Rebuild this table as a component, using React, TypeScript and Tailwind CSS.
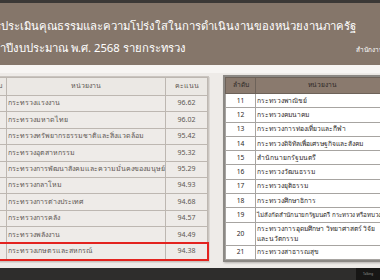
const leftRows = [
  { no: 1, name: 'กระทรวงแรงงาน', score: '96.62' },
  { no: 2, name: 'กระทรวงมหาดไทย', score: '96.02' },
  { no: 3, name: 'กระทรวงทรัพยากรธรรมชาติและสิ่งแวดล้อม', score: '95.42' },
  { no: 4, name: 'กระทรวงอุตสาหกรรม', score: '95.32' },
  { no: 5, name: 'กระทรวงการพัฒนาสังคมและความมั่นคงของมนุษย์', score: '95.29' },
  { no: 6, name: 'กระทรวงกลาโหม', score: '94.93' },
  { no: 7, name: 'กระทรวงการต่างประเทศ', score: '94.68' },
  { no: 8, name: 'กระทรวงการคลัง', score: '94.57' },
  { no: 9, name: 'กระทรวงพลังงาน', score: '94.49' },
  { no: 10, name: 'กระทรวงเกษตรและสหกรณ์', score: '94.38' },
];

const rightRows = [
  { no: 11, name: 'กระทรวงพาณิชย์', score: '94.21' },
  { no: 12, name: 'กระทรวงคมนาคม', score: '94.05' },
  { no: 13, name: 'กระทรวงการท่องเที่ยวและกีฬา', score: '93.87' },
  { no: 14, name: 'กระทรวงดิจิทัลเพื่อเศรษฐกิจและสังคม', score: '93.64' },
  { no: 15, name: 'สำนักนายกรัฐมนตรี', score: '93.52' },
  { no: 16, name: 'กระทรวงวัฒนธรรม', score: '93.11' },
  { no: 17, name: 'กระทรวงยุติธรรม', score: '92.96' },
  { no: 18, name: 'กระทรวงศึกษาธิการ', score: '92.74' },
  { no: 19, name: 'ไม่สังกัดสำนักนายกรัฐมนตรี กระทรวง หรือทบวง', score: '92.53', tight: true },
  { no: 20, name: 'กระทรวงการอุดมศึกษา วิทยาศาสตร์ วิจัย', name2: 'และนวัตกรรม', score: '92.40' },
  { no: 21, name: 'กระทรวงสาธารณสุข', score: '92.18' },
];

export default function App() {
  return (
    <div className="w-[380px] h-[280px] overflow-hidden bg-[#eeebe8] flex flex-col font-['Noto_Sans','DejaVu_Sans',sans-serif]">
      <div className="h-[3px] bg-[#3b3836]" />

      {/* title band */}
      <header className="h-[62px] bg-[#85766a] text-white overflow-hidden flex flex-col">
        <p className="whitespace-nowrap text-[11.3px] leading-[20px] mt-[13px] -ml-[32px]">
          ผลการประเมินคุณธรรมและความโปร่งใสในการดำเนินงานของหน่วยงานภาครัฐ
        </p>
        <div className="flex items-end mt-[2px]">
          <p className="whitespace-nowrap text-[11.3px] leading-[20px] -ml-[26px]">
            ประจำปีงบประมาณ พ.ศ. 2568 รายกระทรวง
          </p>
          <p className="ml-auto whitespace-nowrap text-[6.5px] leading-[10px] mb-[3px] -mr-[22px] text-white">
            สำนักงาน ป.ป.ช.
          </p>
        </div>
      </header>
      <div className="h-[8px] bg-[#f7f5f3]" />

      <main className="flex-1 flex items-start gap-[14px] pt-[3px] overflow-hidden">
        {/* previous page, faded */}
        <div className="-ml-[22px] shrink-0 border border-[#c9c4bf] shadow-[1px_1px_0_#dcd8d4]">
          <table className="border-collapse text-[7px] text-[#5d5753] table-fixed">
            <thead>
              <tr className="h-[18px] bg-[#ebe8e4]">
                <th className="w-[27px] border border-[#bdb7b1] font-normal">ลำดับ</th>
                <th className="w-[134px] border border-[#bdb7b1] font-normal">หน่วยงาน</th>
                <th className="w-[42px] border border-[#bdb7b1] font-normal">คะแนน</th>
              </tr>
            </thead>
            <tbody>
              {leftRows.map((r) => (
                <tr key={r.no} className={r.no === 10 ? 'h-[17px] outline-2 outline-[#e3231f] -outline-offset-1' : 'h-[16.4px]'}>
                  <td className="border border-[#bdb7b1] text-center">{r.no}</td>
                  <td className="border border-[#bdb7b1] pl-[1px] whitespace-nowrap">{r.name}</td>
                  <td className="border border-[#bdb7b1] text-center">{r.score}</td>
                </tr>
              ))}
            </tbody>
          </table>
        </div>

        {/* current page */}
        <div className="shrink-0 -mt-[1px] border-2 border-[#8c8985] shadow-[1px_1px_2px_#b5b1ad]">
          <table className="border-collapse text-[6.7px] text-[#2c2826] table-fixed bg-white">
            <thead>
              <tr className="h-[16px] bg-[#8a7a6e]">
                <th className="w-[30px] border border-[#6d6259] font-normal">ลำดับ</th>
                <th className="w-[133px] border border-[#6d6259] font-normal">หน่วยงาน</th>
                <th className="w-[42px] border border-[#6d6259] font-normal">คะแนน</th>
              </tr>
            </thead>
            <tbody>
              {rightRows.map((r) => (
                <tr key={r.no} className={r.no === 20 ? 'h-[23px]' : 'h-[14.3px]'}>
                  <td className="border border-[#a7a4a1] text-center">{r.no}</td>
                  <td className={`border border-[#a7a4a1] pl-[1px] leading-[10px] whitespace-nowrap ${r.tight ? 'text-[6.2px]' : ''}`}>
                    {r.name}
                    {r.name2 && (
                      <>
                        <br />
                        {r.name2}
                      </>
                    )}
                  </td>
                  <td className="border border-[#a7a4a1] text-center">{r.score}</td>
                </tr>
              ))}
            </tbody>
          </table>
        </div>
      </main>

      <footer className="h-[12px] bg-[#2e2d2c] flex justify-end">
        <div className="w-[24px] bg-[#171615] text-[3px] text-[#9c9a98] flex items-center justify-center">Talking</div>
      </footer>
    </div>
  );
}
